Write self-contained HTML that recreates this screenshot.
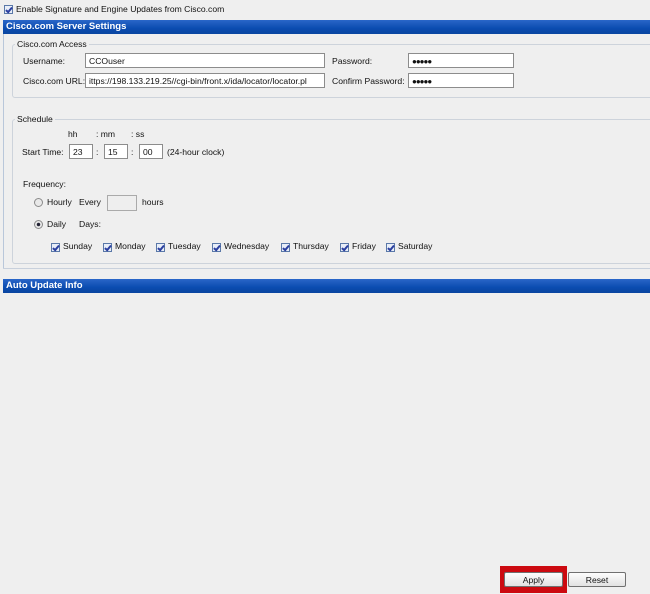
<!DOCTYPE html>
<html><head><style>
body{margin:0;width:650px;height:594px;background:#efefef;font-family:"Liberation Sans",sans-serif;font-size:8.6px;color:#111;position:relative;overflow:hidden}
.a{position:absolute;white-space:nowrap}
.hdr{position:absolute;left:3px;right:0;height:14px;background:linear-gradient(#2a66c8,#0b4cb0 60%,#0a45a0);color:#fff;font-weight:bold;font-size:9.5px;line-height:14px;padding-left:3px}
.inp{position:absolute;background:#fff;border:1px solid #8c8c8c;height:15px;line-height:15px;padding-left:3px;box-sizing:border-box;font-size:8.6px;overflow:hidden;white-space:nowrap}
.cb{position:absolute;width:9px;height:9px;border:1px solid #5a78a8;background:#e8eef8;box-sizing:border-box}
.cb:after{content:"";position:absolute;left:2px;top:0px;width:2px;height:5px;border:solid #2b3fa0;border-width:0 2px 2px 0;transform:rotate(40deg)}
.fs{position:absolute;border:1px solid #cdd3db;border-radius:3px}
.lg{position:absolute;background:#efefef;padding:0 2px}
.rad{position:absolute;width:9px;height:9px;border:1px solid #8a8a8a;border-radius:50%;background:#e8e8e8;box-sizing:border-box}
.btn{position:absolute;height:15px;border:1px solid #707070;border-radius:2px;background:linear-gradient(#fdfdfd,#e2e2e2);text-align:center;line-height:14px;box-sizing:border-box}
</style></head><body>
<div class="cb" style="left:4px;top:5px"></div>
<div class="a" style="left:16px;top:4px">Enable Signature and Engine Updates from Cisco.com</div>
<div class="hdr" style="top:20px">Cisco.com Server Settings</div>
<div style="position:absolute;left:3px;top:34px;width:1px;height:234px;background:#b9c7da"></div>
<div style="position:absolute;left:3px;top:268px;right:0;height:1px;background:#c8d0dc"></div>
<div class="fs" style="left:12px;top:44px;width:660px;height:52px"></div>
<div class="lg a" style="left:15px;top:39px">Cisco.com Access</div>
<div class="a" style="left:23px;top:56px">Username:</div>
<div class="inp" style="left:85px;top:53px;width:240px">CCOuser</div>
<div class="a" style="left:23px;top:76px">Cisco.com URL:</div>
<div class="inp" style="left:85px;top:73px;width:240px">ittps://198.133.219.25//cgi-bin/front.x/ida/locator/locator.pl</div>
<div class="a" style="left:332px;top:56px">Password:</div>
<div class="inp" style="left:408px;top:53px;width:106px;font-size:8px;letter-spacing:-1px">●●●●●</div>
<div class="a" style="left:332px;top:76px">Confirm Password:</div>
<div class="inp" style="left:408px;top:73px;width:106px;font-size:8px;letter-spacing:-1px">●●●●●</div>
<div class="fs" style="left:12px;top:119px;width:660px;height:143px"></div>
<div class="lg a" style="left:15px;top:114px">Schedule</div>
<div class="a" style="left:68px;top:129px">hh</div>
<div class="a" style="left:96px;top:129px">: mm</div>
<div class="a" style="left:131px;top:129px">: ss</div>
<div class="a" style="left:22px;top:147px">Start Time:</div>
<div class="inp" style="left:69px;top:144px;width:24px">23</div>
<div class="a" style="left:96px;top:147px">:</div>
<div class="inp" style="left:104px;top:144px;width:24px">15</div>
<div class="a" style="left:131px;top:147px">:</div>
<div class="inp" style="left:139px;top:144px;width:24px">00</div>
<div class="a" style="left:167px;top:147px">(24-hour clock)</div>
<div class="a" style="left:23px;top:179px">Frequency:</div>
<div class="rad" style="left:34px;top:198px"></div>
<div class="a" style="left:47px;top:197px">Hourly</div>
<div class="a" style="left:79px;top:197px">Every</div>
<div class="inp" style="left:107px;top:195px;width:30px;height:16px;border-color:#aaa;background:#eee"></div>
<div class="a" style="left:142px;top:197px">hours</div>
<div class="rad" style="left:34px;top:220px;background:radial-gradient(#223 30%,#e8e8e8 40%)"></div>
<div class="a" style="left:47px;top:219px">Daily</div>
<div class="a" style="left:79px;top:219px">Days:</div>
<div class="cb" style="left:51px;top:243px"></div><div class="a" style="left:63px;top:241px">Sunday</div>
<div class="cb" style="left:103px;top:243px"></div><div class="a" style="left:115px;top:241px">Monday</div>
<div class="cb" style="left:156px;top:243px"></div><div class="a" style="left:168px;top:241px">Tuesday</div>
<div class="cb" style="left:212px;top:243px"></div><div class="a" style="left:224px;top:241px">Wednesday</div>
<div class="cb" style="left:281px;top:243px"></div><div class="a" style="left:293px;top:241px">Thursday</div>
<div class="cb" style="left:340px;top:243px"></div><div class="a" style="left:352px;top:241px">Friday</div>
<div class="cb" style="left:386px;top:243px"></div><div class="a" style="left:398px;top:241px">Saturday</div>
<div class="hdr" style="top:279px">Auto Update Info</div>
<div style="position:absolute;left:500px;top:566px;width:67px;height:27px;background:#cc0a10"></div>
<div class="btn" style="left:504px;top:572px;width:59px">Apply</div>
<div class="btn" style="left:568px;top:572px;width:58px">Reset</div>
</body></html>
